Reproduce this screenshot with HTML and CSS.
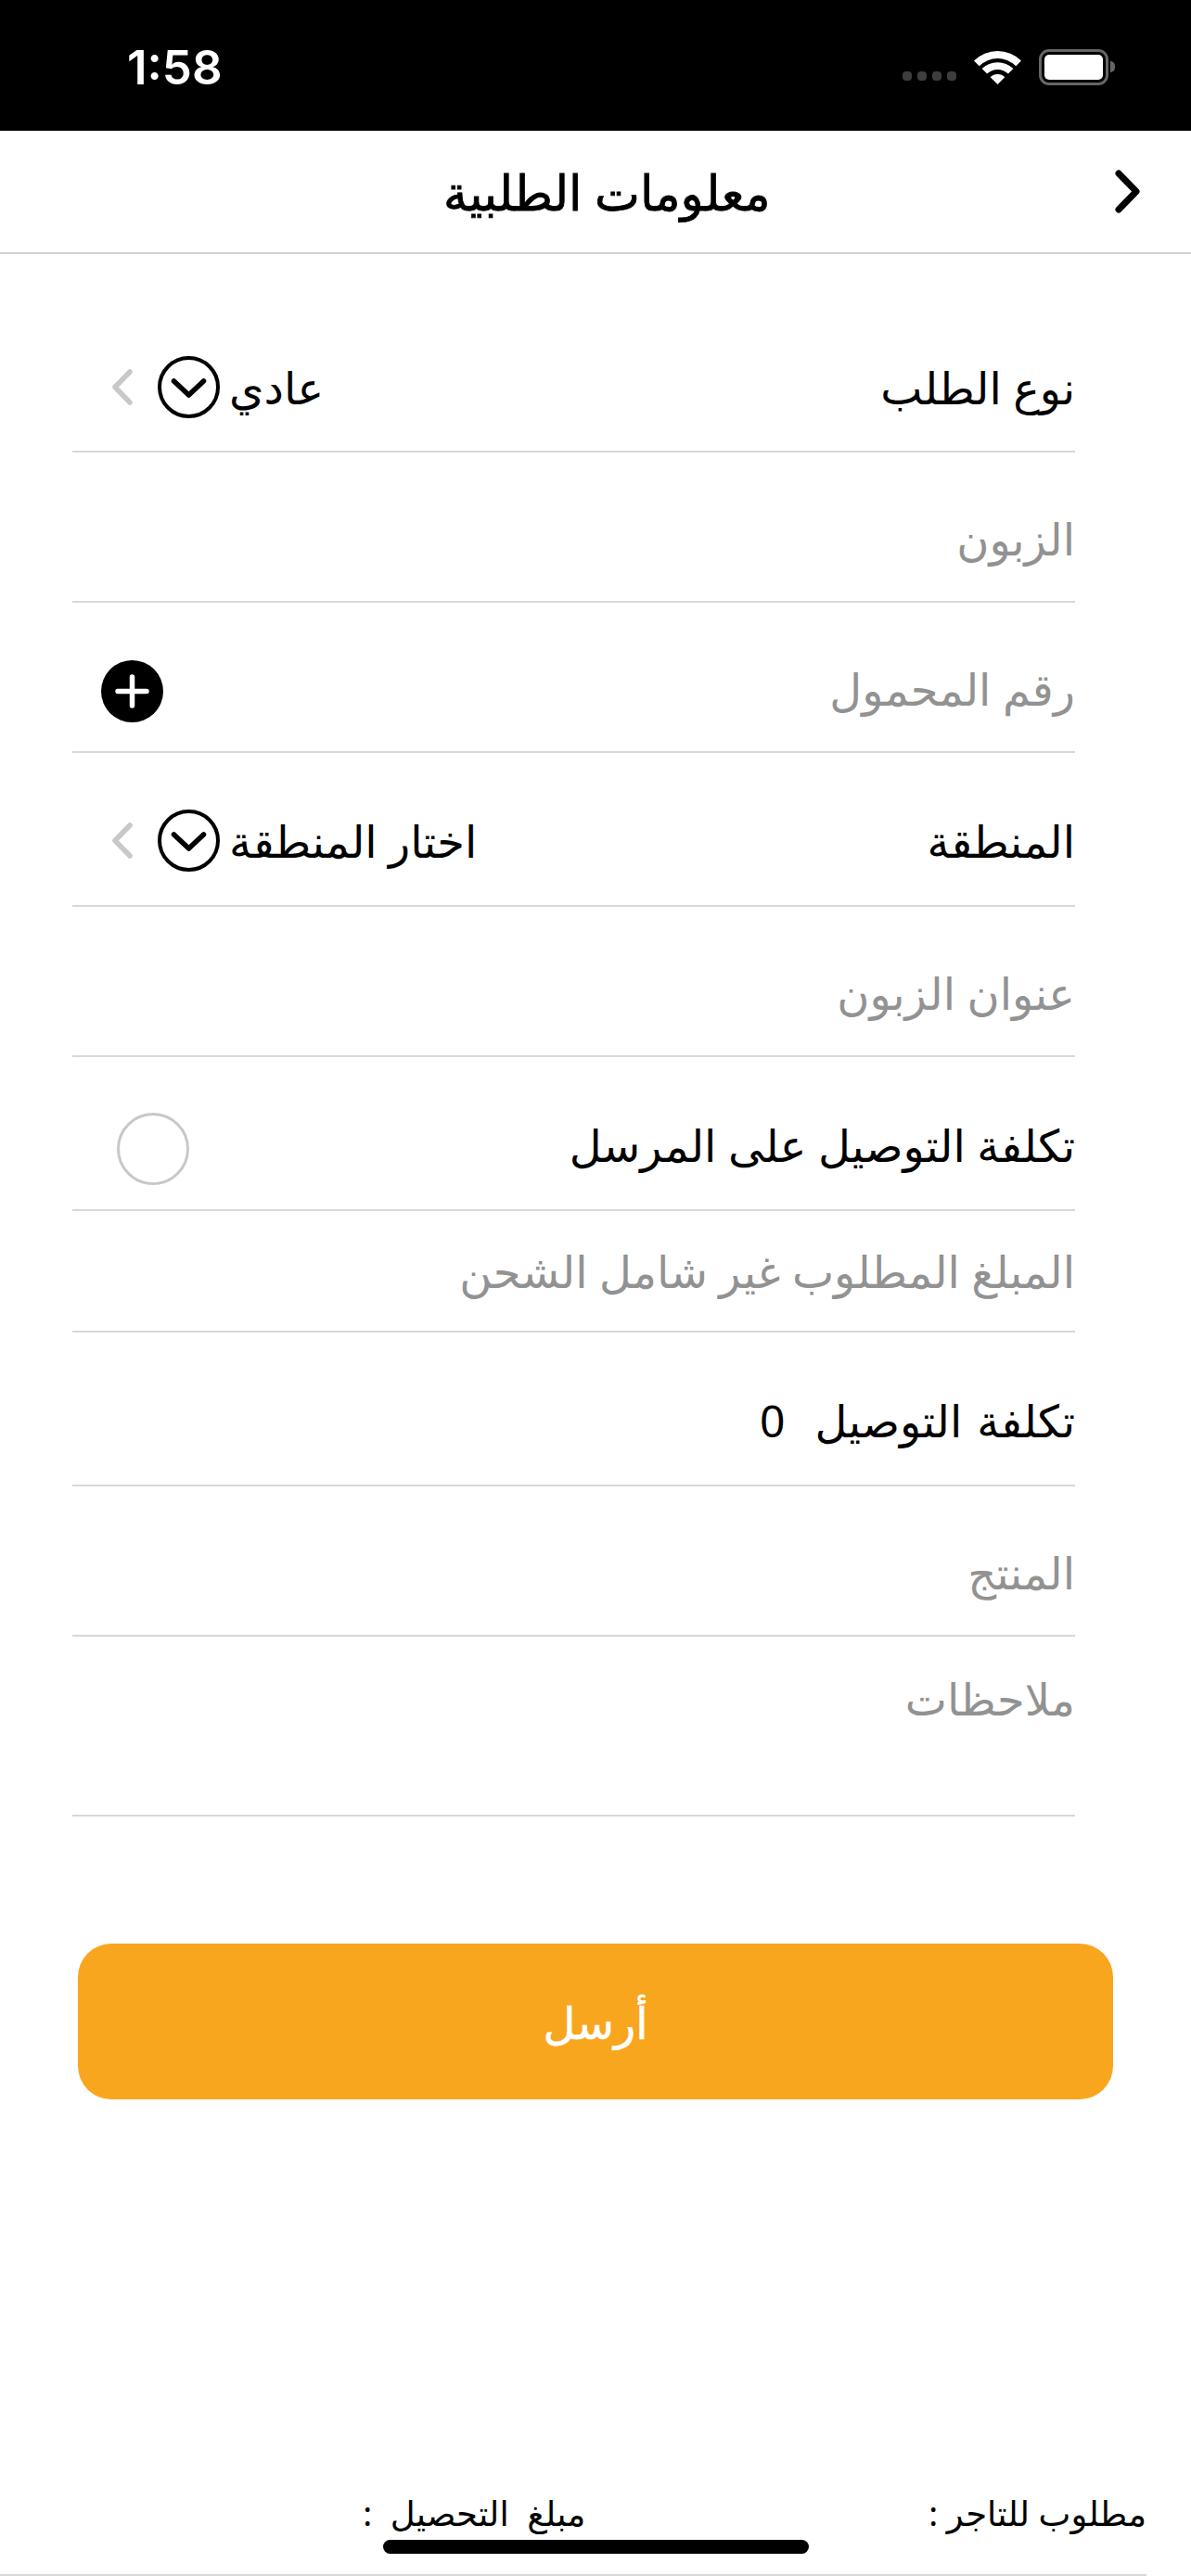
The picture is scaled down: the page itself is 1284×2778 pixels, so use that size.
FILE: index.html
```html
<!DOCTYPE html>
<html lang="ar">
<head>
  <meta charset="UTF-8">
  <title>معلومات الطلبية</title>
  <link rel="stylesheet" href="styles.css">
</head>
<body>
  <div class="status-bar">
    <span class="time">1:58</span>
    <div class="status-icons">
      <div class="signal"><i></i><i></i><i></i><i></i></div>
      <svg class="wifi" width="51" height="37" viewBox="0 0 51 37"><path d="M0 11.500 A36 36 0 0 1 51 11.500 L45.300 17.200 A28 28 0 0 0 5.700 17.200 Z M8.600 20.100 A24 24 0 0 1 42.400 20.100 L36.900 25.600 A16.200 16.200 0 0 0 14.100 25.600 Z M25.500 37 L17.700 29.200 A11 11 0 0 1 33.300 29.200 Z" fill="#fff"/></svg>
      <div class="battery"><div class="battery-level"></div></div>
      <div class="battery-tip"></div>
    </div>
  </div>

  <header class="nav-bar">
    <h1>معلومات الطلبية</h1>
    <svg class="back" width="27" height="47" viewBox="0 0 27 47"><path d="M4 4 L23 23.500 L4 43" fill="none" stroke="#000" stroke-width="7" stroke-linecap="round" stroke-linejoin="round"/></svg>
  </header>

  <form class="order-form" dir="rtl">
    <div class="row row-type">
      <span class="label">نوع الطلب</span>
      <div class="picker">
        <span class="value">عادي</span>
        <svg width="67" height="67" viewBox="0 0 67 67"><circle cx="33.500" cy="33.500" r="31.500" fill="none" stroke="#000" stroke-width="4"/><path d="M17.500 27 L33.500 42 L49.500 27" fill="none" stroke="#000" stroke-width="5.500" stroke-linecap="round" stroke-linejoin="round"/></svg>
        <svg class="chev" width="22" height="39" viewBox="0 0 22 39"><path d="M19 3 L3 19.500 L19 36" fill="none" stroke="#c8c8c8" stroke-width="5.500" stroke-linecap="round" stroke-linejoin="round"/></svg>
      </div>
    </div>
    <div class="row row-customer"><span class="placeholder">الزبون</span></div>
    <div class="row row-phone">
      <span class="placeholder">رقم المحمول</span>
      <svg class="plus" width="67" height="67" viewBox="0 0 67 67"><circle cx="33.500" cy="33.500" r="33.500"/><path d="M33.500 18 V49 M18 33.500 H49" stroke="#fff" stroke-width="5.500" stroke-linecap="round"/></svg>
    </div>
    <div class="row row-area">
      <span class="label">المنطقة</span>
      <div class="picker">
        <span class="value">اختار المنطقة</span>
        <svg width="67" height="67" viewBox="0 0 67 67"><circle cx="33.500" cy="33.500" r="31.500" fill="none" stroke="#000" stroke-width="4"/><path d="M17.500 27 L33.500 42 L49.500 27" fill="none" stroke="#000" stroke-width="5.500" stroke-linecap="round" stroke-linejoin="round"/></svg>
        <svg class="chev" width="22" height="39" viewBox="0 0 22 39"><path d="M19 3 L3 19.500 L19 36" fill="none" stroke="#c8c8c8" stroke-width="5.500" stroke-linecap="round" stroke-linejoin="round"/></svg>
      </div>
    </div>
    <div class="row row-address"><span class="placeholder">عنوان الزبون</span></div>
    <div class="row row-sender">
      <span class="label">تكلفة التوصيل على المرسل</span>
      <div class="radio"></div>
    </div>
    <div class="row row-amount"><span class="placeholder">المبلغ المطلوب غير شامل الشحن</span></div>
    <div class="row row-cost"><span class="label">تكلفة التوصيل&nbsp; 0</span></div>
    <div class="row row-product"><span class="placeholder">المنتج</span></div>
    <div class="row row-notes"><span class="placeholder">ملاحظات</span></div>
  </form>

  <button class="send" type="button">أرسل</button>

  <footer class="totals" dir="rtl">
    <span>مطلوب للتاجر :</span>
    <span class="collect">مبلغ التحصيل :</span>
  </footer>
  <div class="home-indicator"></div>
</body>
</html>
```

FILE: styles.css
```css
* { box-sizing: border-box; }
html, body { margin: 0; padding: 0; }
body { width: 1284px; height: 2778px; background: #fff; color: #000; font-family: "Noto Sans", "DejaVu Sans", sans-serif; position: relative; overflow: hidden; display: flex; flex-direction: column; }

.status-bar { height: 141px; flex: none; background: #000; color: #fff; display: flex; justify-content: space-between; align-items: center; padding: 0 82px 0 137px; }
.time { font-family: Inter, sans-serif; font-size: 51px; font-weight: 600; margin-top: 3px; }
.status-icons { display: flex; align-items: center; }
.signal { display: flex; gap: 6px; margin: 22px 19px 0 0; }
.signal i { width: 10px; height: 10px; border-radius: 4px; background: #3e3e3e; }
.wifi { margin-top: 4px; }
.battery { width: 75px; height: 39px; border: 3px solid #666; border-radius: 11px; padding: 3px; margin: 3px 0 0 19px; }
.battery-level { height: 100%; background: #fff; border-radius: 5px; }
.battery-tip { width: 5px; height: 12px; background: #666; border-radius: 0 6px 6px 0; margin: 3px 0 0 2px; }

.nav-bar { height: 133px; flex: none; border-bottom: 2px solid #d0d0d0; display: flex; align-items: center; justify-content: space-between; padding: 0 55px 0 478px; }
.nav-bar h1 { margin: 0; font-size: 52px; font-weight: 400; -webkit-text-stroke: 0.8px #000; }

.order-form { flex: none; margin: 0 125px 0 78px; padding-top: 78px; }
.row { display: flex; justify-content: space-between; align-items: center; border-bottom: 2px solid #d8d8d8; font-size: 48px; padding-top: 24px; }
.placeholder { color: #929292; }
.picker { display: flex; align-items: center; gap: 10px; padding-left: 43px; }
.picker .chev { margin-right: 17px; }
.plus { margin: 6px 0 0 31px; }
.radio { width: 78px; height: 78px; border: 3px solid #c8c8c8; border-radius: 50%; margin: 10px 0 0 48px; }

.row-type { height: 136px; padding: 0 0 3px; }
.row-customer, .row-phone, .row-address, .row-product { height: 162px; }
.row-area, .row-sender, .row-cost { height: 166px; }
.row-amount { height: 131px; padding-top: 0; }
.row-cost { word-spacing: 3.500px; }
.row-notes { height: 194px; align-items: flex-start; padding-top: 34px; }

.send { display: block; flex: none; width: 1116px; height: 168px; margin: 137px 0 0 84px; border: 0; border-radius: 36px; background: #f9a61f; color: #fff; font: 500 48px "Noto Sans", "DejaVu Sans", sans-serif; -webkit-text-stroke: 0.6px #fff; }

.totals { margin: auto 48px 0 0; height: 96px; flex: none; border-bottom: 2px solid #d8d8d8; font-size: 37px; display: flex; gap: 370px; padding-top: 2px; }
.collect { word-spacing: 10px; }
.home-indicator { position: absolute; left: 413px; bottom: 24px; width: 459px; height: 15px; border-radius: 8px; background: #000; }
```
